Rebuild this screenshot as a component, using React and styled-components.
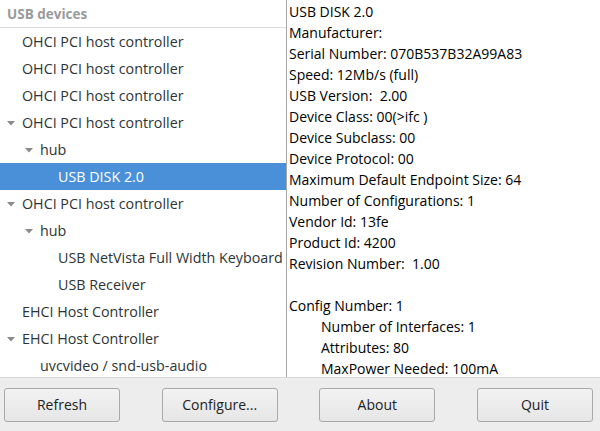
import React from "react";
import styled, { createGlobalStyle } from "styled-components";

const GlobalStyle = createGlobalStyle`
  html, body {
    margin: 0;
    padding: 0;
    background: #ededed;
  }
  body {
    font-family: "Open Sans", "DejaVu Sans", sans-serif;
    font-size: 14px;
    color: #2e3436;
  }
`;

const devices = [
  { label: "OHCI PCI host controller", level: 0 },
  { label: "OHCI PCI host controller", level: 0 },
  { label: "OHCI PCI host controller", level: 0 },
  { label: "OHCI PCI host controller", level: 0, open: true },
  { label: "hub", level: 1, open: true },
  { label: "USB DISK 2.0", level: 2, selected: true },
  { label: "OHCI PCI host controller", level: 0, open: true },
  { label: "hub", level: 1, open: true },
  { label: "USB NetVista Full Width Keyboard", level: 2 },
  { label: "USB Receiver", level: 2 },
  { label: "EHCI Host Controller", level: 0 },
  { label: "EHCI Host Controller", level: 0, open: true },
  { label: "uvcvideo / snd-usb-audio", level: 1 },
];

const info = [
  { text: "USB DISK 2.0" },
  { text: "Manufacturer:" },
  { text: "Serial Number: 070B537B32A99A83" },
  { text: "Speed: 12Mb/s (full)" },
  { text: "USB Version:  2.00" },
  { text: "Device Class: 00(>ifc )" },
  { text: "Device Subclass: 00" },
  { text: "Device Protocol: 00" },
  { text: "Maximum Default Endpoint Size: 64" },
  { text: "Number of Configurations: 1" },
  { text: "Vendor Id: 13fe" },
  { text: "Product Id: 4200" },
  { text: "Revision Number:  1.00" },
  { text: "" },
  { text: "Config Number: 1" },
  { text: "Number of Interfaces: 1", indent: true },
  { text: "Attributes: 80", indent: true },
  { text: "MaxPower Needed: 100mA", indent: true },
];

const Window = styled.div`
  width: 600px;
  height: 431px;
  display: flex;
  flex-direction: column;
  background: #ededed;
  overflow: hidden;
`;

const Panes = styled.div`
  height: 378px;
  display: flex;
  background: #ffffff;
  border-bottom: 1px solid #d6d6d6;
  box-sizing: border-box;
`;

const TreePane = styled.div`
  width: 286px;
  border-right: 1px solid #a8a8a8;
  overflow: hidden;
  flex-shrink: 0;
`;

const TreeHeader = styled.div`
  height: 28px;
  box-sizing: border-box;
  border-bottom: 1px solid #dcdcdc;
  padding-left: 7px;
  display: flex;
  align-items: center;
  font-size: 13.5px;
  font-weight: 700;
  color: #9a9a9a;
`;

const TreeRow = styled.div`
  height: 27px;
  display: flex;
  align-items: center;
  padding-left: ${({ $level }) => 6 + $level * 18}px;
  background: ${({ $selected }) => ($selected ? "#4a90d9" : "transparent")};
  color: ${({ $selected }) => ($selected ? "#ffffff" : "#2e3436")};
  font-size: 14.3px;
  white-space: nowrap;
`;

const Expander = styled.span`
  width: 16px;
  display: inline-flex;
  align-items: center;
  flex-shrink: 0;
  svg {
    display: block;
  }
`;

const InfoPane = styled.div`
  flex: 1;
  padding: 1px 0 0 2px;
  overflow: hidden;
  color: #000000;
`;

const InfoLine = styled.div`
  height: 21px;
  line-height: 22px;
  padding-left: ${({ $indent }) => ($indent ? 32 : 0)}px;
  white-space: pre;
`;

const ButtonBar = styled.div`
  flex: 1;
  display: flex;
  align-items: center;
  justify-content: space-between;
  padding: 0 7px 0 4px;
`;

const Button = styled.button`
  width: 116px;
  height: 34px;
  font-family: inherit;
  font-size: 14px;
  color: #222222;
  background: linear-gradient(#f2f2f2, #e6e6e6);
  border: 1px solid #a9a9a9;
  border-radius: 3px;
  padding: 0;
`;

const Triangle = () => (
  <svg width="10" height="8" viewBox="0 0 10 8">
    <path d="M1 2 L9 2 L5 6.5 Z" fill="#8a8a8a" />
  </svg>
);

export default function App() {
  return (
    <Window>
      <GlobalStyle />
      <Panes>
        <TreePane>
          <TreeHeader>USB devices</TreeHeader>
          {devices.map((d, i) => (
            <TreeRow key={i} $level={d.level} $selected={d.selected}>
              <Expander>{d.open ? <Triangle /> : null}</Expander>
              {d.label}
            </TreeRow>
          ))}
        </TreePane>
        <InfoPane>
          {info.map((l, i) => (
            <InfoLine key={i} $indent={l.indent}>
              {l.text}
            </InfoLine>
          ))}
        </InfoPane>
      </Panes>
      <ButtonBar>
        <Button>Refresh</Button>
        <Button>Configure...</Button>
        <Button>About</Button>
        <Button>Quit</Button>
      </ButtonBar>
    </Window>
  );
}
